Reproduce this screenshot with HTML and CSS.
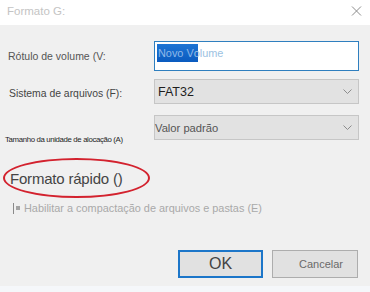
FILE: index.html
```html
<!DOCTYPE html>
<html lang="pt">
<head>
<meta charset="utf-8">
<link rel="stylesheet" href="styles.css">
</head>
<body>
<div class="dialog">
  <div class="titlebar">
    <span class="title">Formato G:</span>
    <svg class="close" width="11" height="10" viewBox="0 0 11 10"><path d="M1 0.5 L10 9.5 M10 0.5 L1 9.5" stroke="#8a8a8a" stroke-width="1" fill="none"/></svg>
  </div>
  <div class="content">
    <div class="row row-volume">
      <label class="lbl lbl-volume">Rótulo de volume (V:</label>
      <div class="input"><span class="sel">Novo V</span><span class="rest">olume</span></div>
    </div>
    <div class="row row-fs">
      <label class="lbl lbl-fs">Sistema de arquivos (F):</label>
      <div class="select select-fs"><span>FAT32</span><svg class="chev" width="9" height="5" viewBox="0 0 9 5"><path d="M0.5 0.5 L4.5 4.5 L8.5 0.5" stroke="#8c8c8c" fill="none"/></svg></div>
    </div>
    <div class="row row-alloc">
      <label class="lbl lbl-alloc">Tamanho da unidade de alocação (A)</label>
      <div class="select select-alloc"><span>Valor padrão</span><svg class="chev" width="9" height="5" viewBox="0 0 9 5"><path d="M0.5 0.5 L4.5 4.5 L8.5 0.5" stroke="#8c8c8c" fill="none"/></svg></div>
    </div>
    <div class="quick"><span>Formato rápido ()</span></div>
    <div class="compress">
      <span class="caret"></span><span class="box"></span><span class="ctext">Habilitar a compactação de arquivos e pastas (E)</span>
    </div>
    <div class="buttons">
      <div class="btn btn-ok">OK</div>
      <div class="btn btn-cancel">Cancelar</div>
    </div>
  </div>
  <div class="footer"></div>
</div>
</body>
</html>
```
FILE: styles.css
```css
html, body {
  margin: 0;
  padding: 0;
}
body {
  background: #f0f0f0;
  font-family: "Liberation Sans", Arial, sans-serif;
}
.dialog {
  width: 370px;
  height: 292px;
  display: flex;
  flex-direction: column;
  background: #f0f0f0;
}
.titlebar {
  height: 25px;
  flex: none;
  background: #ffffff;
  display: flex;
  align-items: center;
  justify-content: space-between;
  padding: 0 8px 0 7px;
  box-sizing: border-box;
}
.title {
  font-size: 11.5px;
  color: #c4c4c4;
  margin-top: -3px;
}
.close {
  margin-top: -3px;
}
.content {
  flex: 1;
  display: flex;
  flex-direction: column;
  padding-top: 16px;
}
.row {
  display: flex;
  align-items: center;
}
.lbl {
  width: 154px;
  flex: none;
  box-sizing: border-box;
  white-space: nowrap;
}
.lbl-volume {
  padding-left: 8px;
  font-size: 10.5px;
  color: #555;
}
.lbl-fs {
  padding-left: 9px;
  font-size: 10.4px;
  color: #444;
  margin-top: 3px;
}
.lbl-alloc {
  padding-left: 5px;
  font-size: 7.8px;
  color: #1e1e1e;
  letter-spacing: -0.35px;
  align-self: flex-end;
  margin-bottom: -4px;
}
.input {
  width: 205px;
  height: 30px;
  box-sizing: border-box;
  border: 1px solid #2f7fbf;
  background: #fff;
  font-size: 10.9px;
  color: #9cc2e2;
  padding: 2px 0 0 2px;
  display: flex;
  align-items: flex-start;
}
.sel {
  background: linear-gradient(#1d74d4, #0b5bbf);
  color: #8fb8e8;
  line-height: 18px;
  padding-left: 1px;
  padding-right: 4px;
  margin-right: -4px;
}
.rest {
  line-height: 18px;
}
.row-fs {
  margin-top: 8px;
}
.row-alloc {
  margin-top: 11px;
}
.select {
  width: 205px;
  height: 25px;
  box-sizing: border-box;
  border: 1px solid #c6c6c6;
  background: #e2e2e2;
  display: flex;
  align-items: center;
  justify-content: space-between;
  padding-right: 6px;
}
.select-fs {
  padding-left: 3px;
  font-size: 12.5px;
  color: #1e1e1e;
}
.select-alloc {
  padding-left: 0;
  font-size: 11.2px;
  color: #555;
}
.chev {
  flex: none;
}
.quick {
  margin: 18px 0 0 3px;
  width: 147px;
  height: 40px;
  box-sizing: border-box;
  border: 2px solid #d3222e;
  border-radius: 50%;
  display: flex;
  align-items: center;
  padding-left: 5px;
  font-size: 15px;
  color: #444;
}
.quick span {
  margin-top: 1px;
  letter-spacing: -0.2px;
}
.compress {
  display: flex;
  align-items: center;
  margin-top: 4px;
  padding-left: 13px;
  height: 12px;
}
.caret {
  width: 1px;
  height: 11px;
  background: #8a8a8a;
}
.box {
  width: 4px;
  height: 4px;
  background: #a4a4a4;
  margin-left: 2px;
}
.ctext {
  margin-left: 4px;
  font-size: 10.9px;
  color: #a9a9a9;
}
.buttons {
  display: flex;
  justify-content: flex-end;
  gap: 9px;
  padding-right: 12px;
  margin-top: 36px;
}
.btn {
  height: 28px;
  box-sizing: border-box;
  background: #e1e1e1;
  display: flex;
  align-items: center;
  justify-content: center;
}
.btn-ok {
  width: 85px;
  border: 2px solid #1c76c9;
  font-size: 16px;
  color: #444;
}
.btn-cancel {
  width: 86px;
  border: 1px solid #adadad;
  font-size: 11px;
  color: #6a6a6a;
  padding-left: 12px;
}
.footer {
  height: 6px;
  flex: none;
  background: #f5f7fa;
}
```
